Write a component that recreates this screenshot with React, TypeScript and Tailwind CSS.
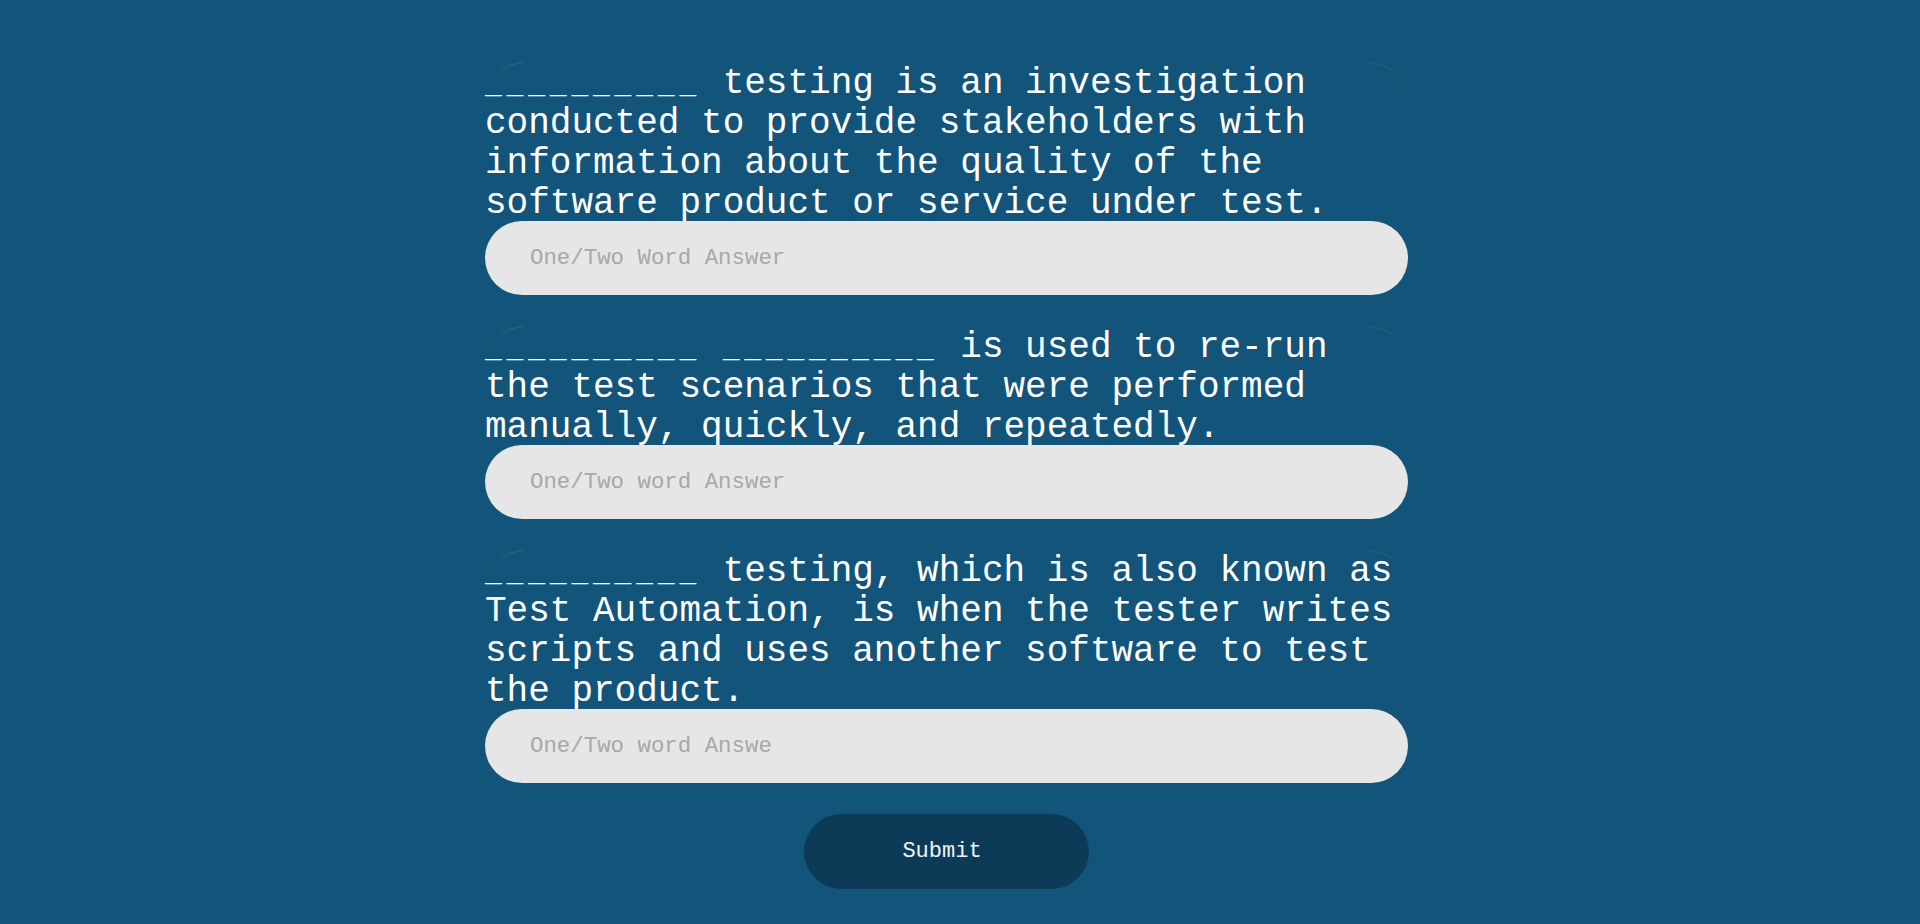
import React from "react";

type Q = { blanks: number; text: string; placeholder: string };

const questions: Q[] = [
  {
    blanks: 1,
    text: " testing is an investigation conducted to provide stakeholders with information about the quality of the software product or service under test.",
    placeholder: "One/Two Word Answer",
  },
  {
    blanks: 2,
    text: " is used to re-run the test scenarios that were performed manually, quickly, and repeatedly.",
    placeholder: "One/Two word Answer",
  },
  {
    blanks: 1,
    text: " testing, which is also known as Test Automation, is when the tester writes scripts and uses another software to test the product.",
    placeholder: "One/Two word Answe",
  },
];

function Blank() {
  return (
    <span className="text-[28px] leading-none tracking-[4.8px]">__________</span>
  );
}

export default function App() {
  return (
    <div className="min-h-screen w-full bg-[#13547a] font-['Liberation_Mono','DejaVu_Sans_Mono',monospace]">
      <div className="flex justify-center pr-[27px] pt-[62px]">
        <form
          className="flex w-[923px] flex-col gap-[31px]"
          onSubmit={(e) => e.preventDefault()}
        >
          {questions.map((q, i) => (
            <div key={i} className="relative flex flex-col pt-px">
              <div className="pointer-events-none absolute inset-x-0 top-0 h-[80px] rounded-[40px] border-t border-[#2c6e6e] [mask-image:linear-gradient(to_right,black_0px,black_38px,transparent_38px,transparent_calc(100%-38px),black_calc(100%-38px))]" />
              <p className="-mb-[3px] pt-[1px] text-[36px] leading-[40px] text-white">
                <Blank />
                {q.blanks === 2 ? (
                  <>
                    {" "}
                    <Blank />
                  </>
                ) : null}
                {q.text}
              </p>
              <input
                type="text"
                placeholder={q.placeholder}
                className="relative h-[74px] w-full rounded-full bg-[#e6e6e6] pl-[45px] pr-6 font-['Liberation_Mono','DejaVu_Sans_Mono',monospace] text-[22.4px] text-[#333] outline-none placeholder:text-[#a8a8a8]"
              />
            </div>
          ))}
          <div className="flex justify-center">
            <button
              type="submit"
              className="h-[75px] w-[285px] rounded-full bg-[#0d3b57] pr-[9px] font-['Liberation_Mono','DejaVu_Sans_Mono',monospace] text-[22px] text-[#eef4f7]"
            >
              Submit
            </button>
          </div>
        </form>
      </div>
    </div>
  );
}
